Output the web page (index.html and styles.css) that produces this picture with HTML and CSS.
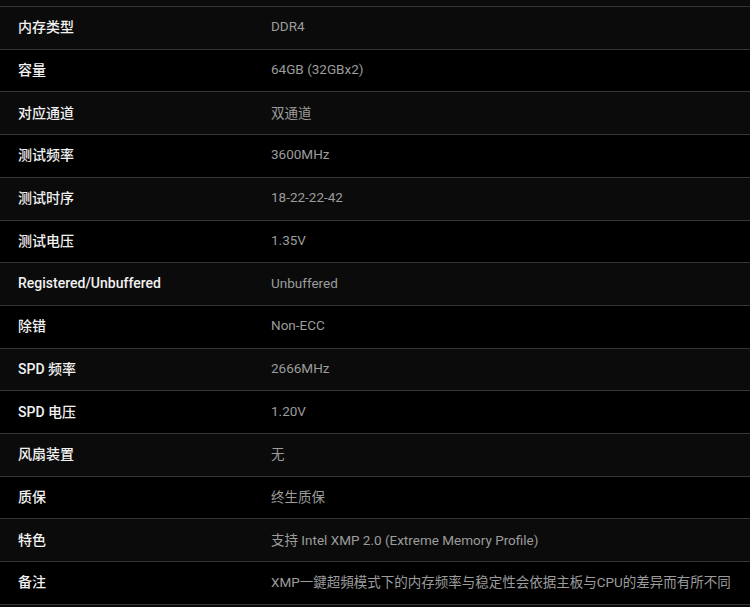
FILE: index.html
```html
<!DOCTYPE html>
<html lang="zh-CN">
<head>
<meta charset="UTF-8">
<meta name="viewport" content="width=device-width, initial-scale=1.0">
<title>内存规格</title>
<link rel="stylesheet" href="styles.css">
</head>
<body>
<div class="spec-table">
  <div class="spec-row"><div class="spec-label">内存类型</div><div class="spec-value">DDR4</div></div>
  <div class="spec-row"><div class="spec-label">容量</div><div class="spec-value">64GB (32GBx2)</div></div>
  <div class="spec-row"><div class="spec-label">对应通道</div><div class="spec-value">双通道</div></div>
  <div class="spec-row"><div class="spec-label">测试频率</div><div class="spec-value">3600MHz</div></div>
  <div class="spec-row"><div class="spec-label">测试时序</div><div class="spec-value">18-22-22-42</div></div>
  <div class="spec-row"><div class="spec-label">测试电压</div><div class="spec-value">1.35V</div></div>
  <div class="spec-row"><div class="spec-label">Registered/Unbuffered</div><div class="spec-value">Unbuffered</div></div>
  <div class="spec-row"><div class="spec-label">除错</div><div class="spec-value">Non-ECC</div></div>
  <div class="spec-row"><div class="spec-label">SPD 频率</div><div class="spec-value">2666MHz</div></div>
  <div class="spec-row"><div class="spec-label">SPD 电压</div><div class="spec-value">1.20V</div></div>
  <div class="spec-row"><div class="spec-label">风扇装置</div><div class="spec-value">无</div></div>
  <div class="spec-row"><div class="spec-label">质保</div><div class="spec-value">终生质保</div></div>
  <div class="spec-row"><div class="spec-label">特色</div><div class="spec-value">支持 Intel XMP 2.0 (Extreme Memory Profile)</div></div>
  <div class="spec-row"><div class="spec-label">备注</div><div class="spec-value">XMP一鍵超頻模式下的内存频率与稳定性会依据主板与CPU的差异而有所不同</div></div>
</div>
</body>
</html>
```

FILE: styles.css
```css
body {
  margin: 0;
  background-color: #0b0b0b;
  font-family: Roboto, 'Noto Sans CJK SC', sans-serif;
}
.spec-table {
  margin-top: 6px;
  border-bottom: 1px solid #363636;
}
.spec-row {
  display: grid;
  grid-template-columns: 253px 1fr;
  align-items: center;
  box-sizing: border-box;
  height: 42.71px;
  padding-left: 18px;
  padding-bottom: 3px;
  border-top: 1px solid #363636;
  background-color: #0b0b0b;
}
.spec-row:nth-child(even) {
  background-color: #000;
}
.spec-label {
  color: #f2f2f2;
  font-size: 14px;
  font-weight: 500;
}
.spec-value {
  color: #9c9c9c;
  font-size: 13.5px;
  white-space: nowrap;
}
```
